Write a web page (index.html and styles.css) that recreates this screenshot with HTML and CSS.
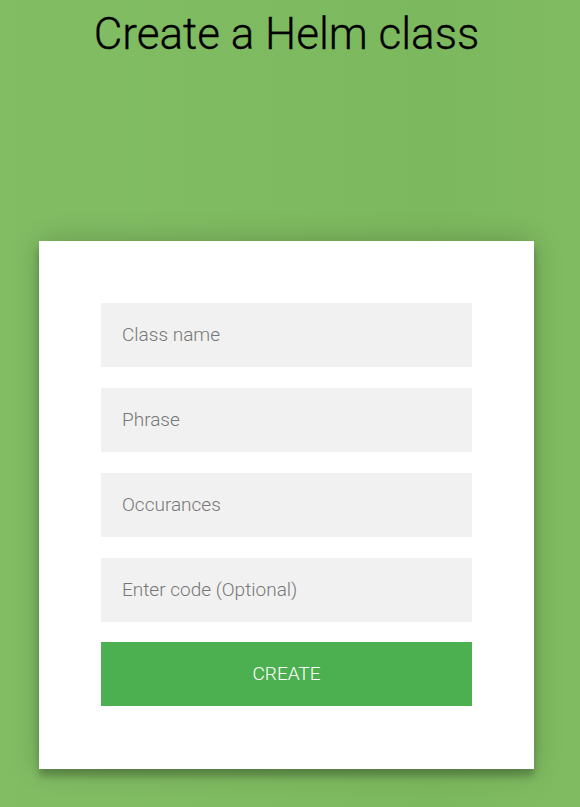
FILE: index.html
```html
<!DOCTYPE html>
<html lang="en">
<head>
  <meta charset="UTF-8" />
  <meta name="viewport" content="width=device-width, initial-scale=1.0"/>
  <title>Create a Helm class</title>
  <link rel="stylesheet" href="styles.css">
</head>
<body>
  <div class="page">
    <h1 class="title">Create a Helm class</h1>

    <div class="form">
      <form class="class-form">
        <input type="text" placeholder="Class name" />
        <input type="text" placeholder="Phrase" />
        <input type="text" placeholder="Occurances" />
        <input type="text" placeholder="Enter code (Optional)" />
        <button type="button">create</button>
      </form>
    </div>
  </div>
</body>
</html>
```

FILE: styles.css
```css
:root {
  --green: #4caf50;
  --bg: #7fbb60;
  --input-bg: #f1f1f1;
  --font: 'Roboto', 'Liberation Sans', sans-serif;
}

body {
  margin: 0;
  min-height: 807px;
  font-family: var(--font);
  font-weight: 300;
  background: #7fbb60;
  background: linear-gradient(to right, #82bd64, #7eba60 50%, #7cb85e 75%, #80bb61);
}

.page {
  width: 573px;
  padding-bottom: 38px;
}

.title {
  margin: 9px 0 0;
  text-align: center;
  font-size: 44px;
  font-weight: 300;
  line-height: 1.172;
  color: #000;
  -webkit-text-stroke: 0.3px #000;
}

.form {
  width: 495px;
  box-sizing: border-box;
  margin: 180px auto 0;
  padding: 62px 62px 63px;
  background: #fff;
  box-shadow: 0 0 27px 0 rgba(0, 0, 0, 0.2), 0 7px 7px 0 rgba(0, 0, 0, 0.24);
}

.class-form {
  display: flex;
  flex-direction: column;
}

.class-form input {
  height: 64px;
  box-sizing: border-box;
  margin: 0 0 21px;
  padding: 0 21px;
  border: 0;
  outline: 0;
  background: var(--input-bg);
  font-family: var(--font);
  font-weight: 300;
  font-size: 19px;
  color: #333;
}

.class-form input::placeholder {
  color: #777;
}

.class-form button {
  height: 64px;
  margin-top: -1px;
  border: 0;
  outline: 0;
  background: var(--green);
  color: #fff;
  font-family: var(--font);
  font-weight: 300;
  font-size: 19px;
  text-transform: uppercase;
  cursor: pointer;
}
```
